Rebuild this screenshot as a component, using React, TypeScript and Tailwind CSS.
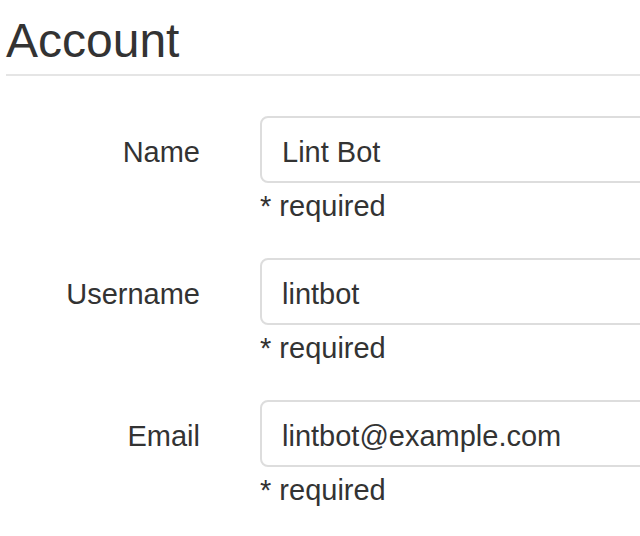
import React from "react";

type FieldProps = {
  label: string;
  value: string;
};

const Field: React.FC<FieldProps> = ({ label, value }) => {
  return (
    <div className="flex items-start mb-[32px]">
      <label className="w-[194px] shrink-0 pt-[16px] text-right text-[29px] leading-[40px] text-[#333]">
        {label}
      </label>
      <div className="ml-[60px] w-[440px] shrink-0">
        <input
          type="text"
          readOnly
          value={value}
          className="box-border block w-full h-[67px] border-2 border-[#dddddd] rounded-[8px] px-[20px] pt-[6px] pb-0 text-[29px] text-[#333] bg-white outline-none"
          style={{ fontFamily: "inherit" }}
        />
        <div className="mt-[3px] text-[29px] leading-[40px] text-[#333]">* required</div>
      </div>
    </div>
  );
};

export default function App() {
  return (
    <div
      className="w-[640px] h-[536px] overflow-hidden bg-white pl-[6px]"
      style={{ fontFamily: '"Liberation Sans", Arial, sans-serif' }}
    >
      <div className="w-[720px]">
        <h1 className="pt-[13px] text-[48px] leading-[56px] font-normal text-[#333]">Account</h1>
        <div className="mt-[5px] h-[2px] bg-[#e5e5e5]" />
        <div className="pt-[40px]">
          <Field label="Name" value="Lint Bot" />
          <Field label="Username" value="lintbot" />
          <Field label="Email" value="lintbot@example.com" />
        </div>
      </div>
    </div>
  );
}
